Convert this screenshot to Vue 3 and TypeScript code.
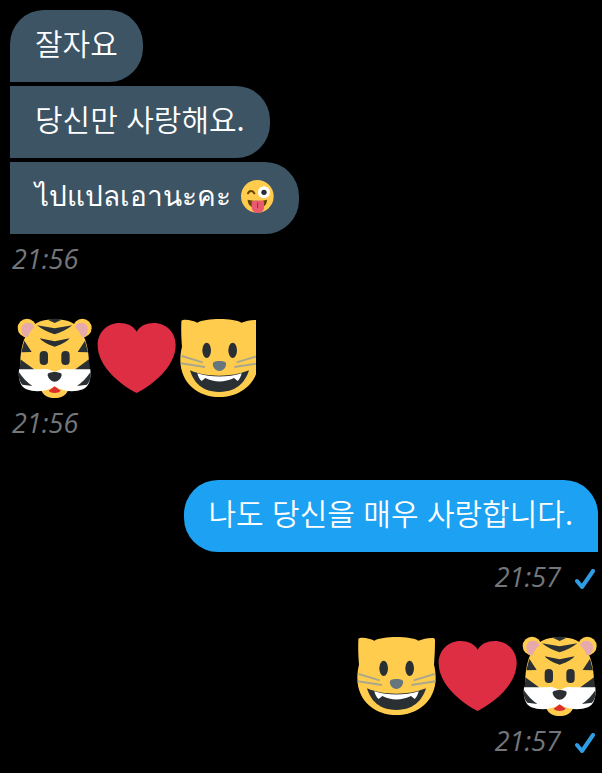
<script setup lang="ts">
type EmojiName = 'tiger' | 'heart' | 'cat'

interface Message {
  id: number
  lang?: string
  text?: string
  wink?: boolean
  emoji?: EmojiName[]
}

interface Group {
  id: number
  mine: boolean
  time: string
  messages: Message[]
}

const groups: Group[] = [
  {
    id: 1,
    mine: false,
    time: '21:56',
    messages: [
      { id: 1, lang: 'ko', text: '잘자요' },
      { id: 2, lang: 'ko', text: '당신만 사랑해요.' },
      { id: 3, lang: 'th', text: 'ไปแปลเอานะคะ', wink: true },
    ],
  },
  { id: 2, mine: false, time: '21:56', messages: [{ id: 4, emoji: ['tiger', 'heart', 'cat'] }] },
  { id: 3, mine: true, time: '21:57', messages: [{ id: 5, lang: 'ko', text: '나도 당신을 매우 사랑합니다.' }] },
  { id: 4, mine: true, time: '21:57', messages: [{ id: 6, emoji: ['cat', 'heart', 'tiger'] }] },
]
</script>

<template>
  <main class="chat">
    <section v-for="group in groups" :key="group.id" class="group" :class="{ mine: group.mine }">
      <template v-for="message in group.messages" :key="message.id">
        <div v-if="message.emoji" class="emoji-row">
          <template v-for="name in message.emoji" :key="name">
            <svg v-if="name === 'tiger'" class="emoji" viewBox="30 24 240 240" role="img" aria-label="tiger">
              <path fill="#ffcc4d" d="M149 28C177 28 205 34 220 54C240 76 254 112 253 190C253 216 226 238 189 242C181 258 165 264 149 264C133 264 117 258 109 242C72 238 45 216 45 190C44 112 58 76 78 54C93 34 121 28 149 28Z" />
              <path fill="#292f33" d="M128 29C142 25 156 25 170 29L149 39ZM96 46L149 55L202 46C186 60 166 67 149 73C132 67 112 60 96 46ZM104 85L149 94L194 85C181 99 165 105 149 110C133 105 117 99 104 85ZM58 92L80 126L49 127ZM240 92L218 126L249 127ZM46 148L89 179L44 186ZM252 148L209 179L254 186Z" />
              <circle cx="66" cy="54" r="28" fill="#ffcc4d" />
              <circle cx="232" cy="54" r="28" fill="#ffcc4d" />
              <path fill="#e6aaaa" d="M50 66C46 48 56 38 69 38C80 38 86 44 88 52C78 60 72 70 68 82C59 82 52 76 50 66ZM248 66C252 48 242 38 229 38C218 38 212 44 210 52C220 60 226 70 230 82C239 82 246 76 248 66Z" />
              <path fill="#fff" d="M42 178H112C126 174 137 180 149 186C161 180 172 174 186 178H256C259 207 252 231 234 238C208 247 179 246 149 230C119 246 90 247 64 238C46 231 39 207 42 178Z" />
              <path fill="#292f33" d="M42 187C52 203 66 217 82 228L52 224C42 214 40 200 42 187ZM256 187C246 203 232 217 216 228L246 224C256 214 258 200 256 187Z" />
              <rect x="104" y="123" width="25" height="42" rx="12" fill="#292f33" />
              <rect x="169" y="123" width="25" height="42" rx="12" fill="#292f33" />
              <path fill="#292f33" d="M128 194C128 183 170 183 170 194C170 204 158 215 149 215C140 215 128 204 128 194Z" />
              <path fill="#dd2e2e" d="M149 229L167 242C160 251 138 251 131 242Z" />
            </svg>
            <svg v-else-if="name === 'heart'" class="emoji" viewBox="21 24 240 240" role="img" aria-label="heart">
              <path fill="#dd2e44" d="M140 65C151 47 169 39 191 39C230 39 257 69 257 105C257 172 185 226 140 249C95 226 23 172 23 105C23 69 50 39 89 39C111 39 129 47 140 65Z" />
            </svg>
            <svg v-else class="emoji" viewBox="33 33 240 240" role="img" aria-label="smiling cat">
              <path fill="#ffcc4d" d="M45 39C61 37 76 42 88 47C112 32 198 32 220 47C234 42 250 38 264 39C268 39 270 41 270 46C270 74 269 94 267 119C270 131 272 143 272 158C272 229 217 270 154 270C91 270 37 229 37 158C37 143 39 131 42 119C40 94 39 74 40 46C40 41 41 39 45 39Z" />
              <g fill="none" stroke="#a9a78c" stroke-width="6">
                <path d="M41 147L104 166M38 169L111 180M269 147L206 166M272 169L199 180" />
              </g>
              <ellipse cx="116" cy="130" rx="13" ry="23" fill="#292f33" />
              <ellipse cx="194" cy="130" rx="13" ry="23" fill="#292f33" />
              <path fill="#67757f" d="M135 168C139 160 170 160 174 168C176 180 166 192 154 192C143 192 132 180 135 168Z" />
              <path fill="#292f33" d="M66 190C94 202 124 206 154 206C184 206 214 202 243 190C235 216 214 255 154 255C94 255 74 216 66 190Z" />
              <path fill="#fff" d="M88 199C130 212 179 212 221 199C219 208 215 217 209 222L198 213C170 227 138 227 112 213L101 222C94 217 90 208 88 199Z" />
            </svg>
          </template>
        </div>
        <p v-else class="bubble" :class="message.lang" :lang="message.lang">
          <span>{{ message.text }}</span>
          <svg v-if="message.wink" class="wink" viewBox="35 30 99 99" role="img" aria-label="winking face">
            <circle cx="84" cy="79" r="49" fill="#ffcc4d" />
            <path d="M56 70C60 60 71 61 75 70" fill="none" stroke="#664500" stroke-width="6" stroke-linecap="round" />
            <circle cx="104" cy="67" r="18" fill="#fff" />
            <circle cx="104" cy="67" r="8" fill="#292f33" />
            <path fill="#664500" d="M55 89C74 94 95 94 113 89C113 105 102 114 84 114C66 114 55 105 55 89Z" />
            <path fill="#e75a70" d="M67 94C78 91 93 91 104 94V112C104 135 67 135 67 112Z" />
            <path d="M85 97V114" stroke="#be1931" stroke-width="3" />
          </svg>
        </p>
      </template>
      <footer class="meta">
        <time>{{ group.time }}</time>
        <svg v-if="group.mine" class="check" viewBox="0 0 20 20" role="img" aria-label="sent">
          <path d="M2 12L7 18L18 2" fill="none" stroke="#2f9de4" stroke-width="4" stroke-linecap="round" stroke-linejoin="round" />
        </svg>
      </footer>
    </section>
  </main>
</template>

<style>
body {
  margin: 0;
  background: #000;
}
</style>

<style scoped>
.chat {
  display: flex;
  flex-direction: column;
  gap: 40px;
  padding: 10px 4px 12px 10px;
  overflow: hidden;
  font-family: 'Noto Sans CJK KR', 'Noto Sans', sans-serif;
}

.group {
  display: flex;
  flex-direction: column;
  align-items: flex-start;
  gap: 4px;
}

.group.mine {
  align-items: flex-end;
}

.bubble {
  display: flex;
  align-items: center;
  box-sizing: border-box;
  min-height: 72px;
  margin: 0;
  padding: 8px 25px 16px;
  border-radius: 0 34px 34px 0;
  background: #3d5465;
  color: #fff;
  font-size: 30px;
  font-weight: 350;
  line-height: 48px;
}

.bubble:first-child {
  border-top-left-radius: 34px;
}

.bubble.th {
  gap: 10px;
  font-size: 28px;
}

.mine .bubble {
  border-radius: 34px 34px 0 34px;
  background: #1da1f2;
}

.wink {
  width: 33px;
  height: 33px;
  margin-top: 4px;
}

.emoji-row {
  display: flex;
  gap: 2px;
  width: 241px;
  padding: 2px 0 0 5px;
  overflow: hidden;
}

.mine .emoji-row {
  width: auto;
  margin-right: -2px;
}

.emoji {
  flex: none;
  width: 80px;
  height: 80px;
}

.meta {
  display: flex;
  align-items: center;
  gap: 14px;
  height: 34px;
  margin-top: 4px;
  padding: 0 3px 0 2px;
  color: #73777b;
  font-family: 'Open Sans', sans-serif;
  font-size: 27px;
  font-style: italic;
  font-weight: 500;
  line-height: 34px;
}

.check {
  width: 20px;
  height: 20px;
  margin-top: 4px;
}
</style>
